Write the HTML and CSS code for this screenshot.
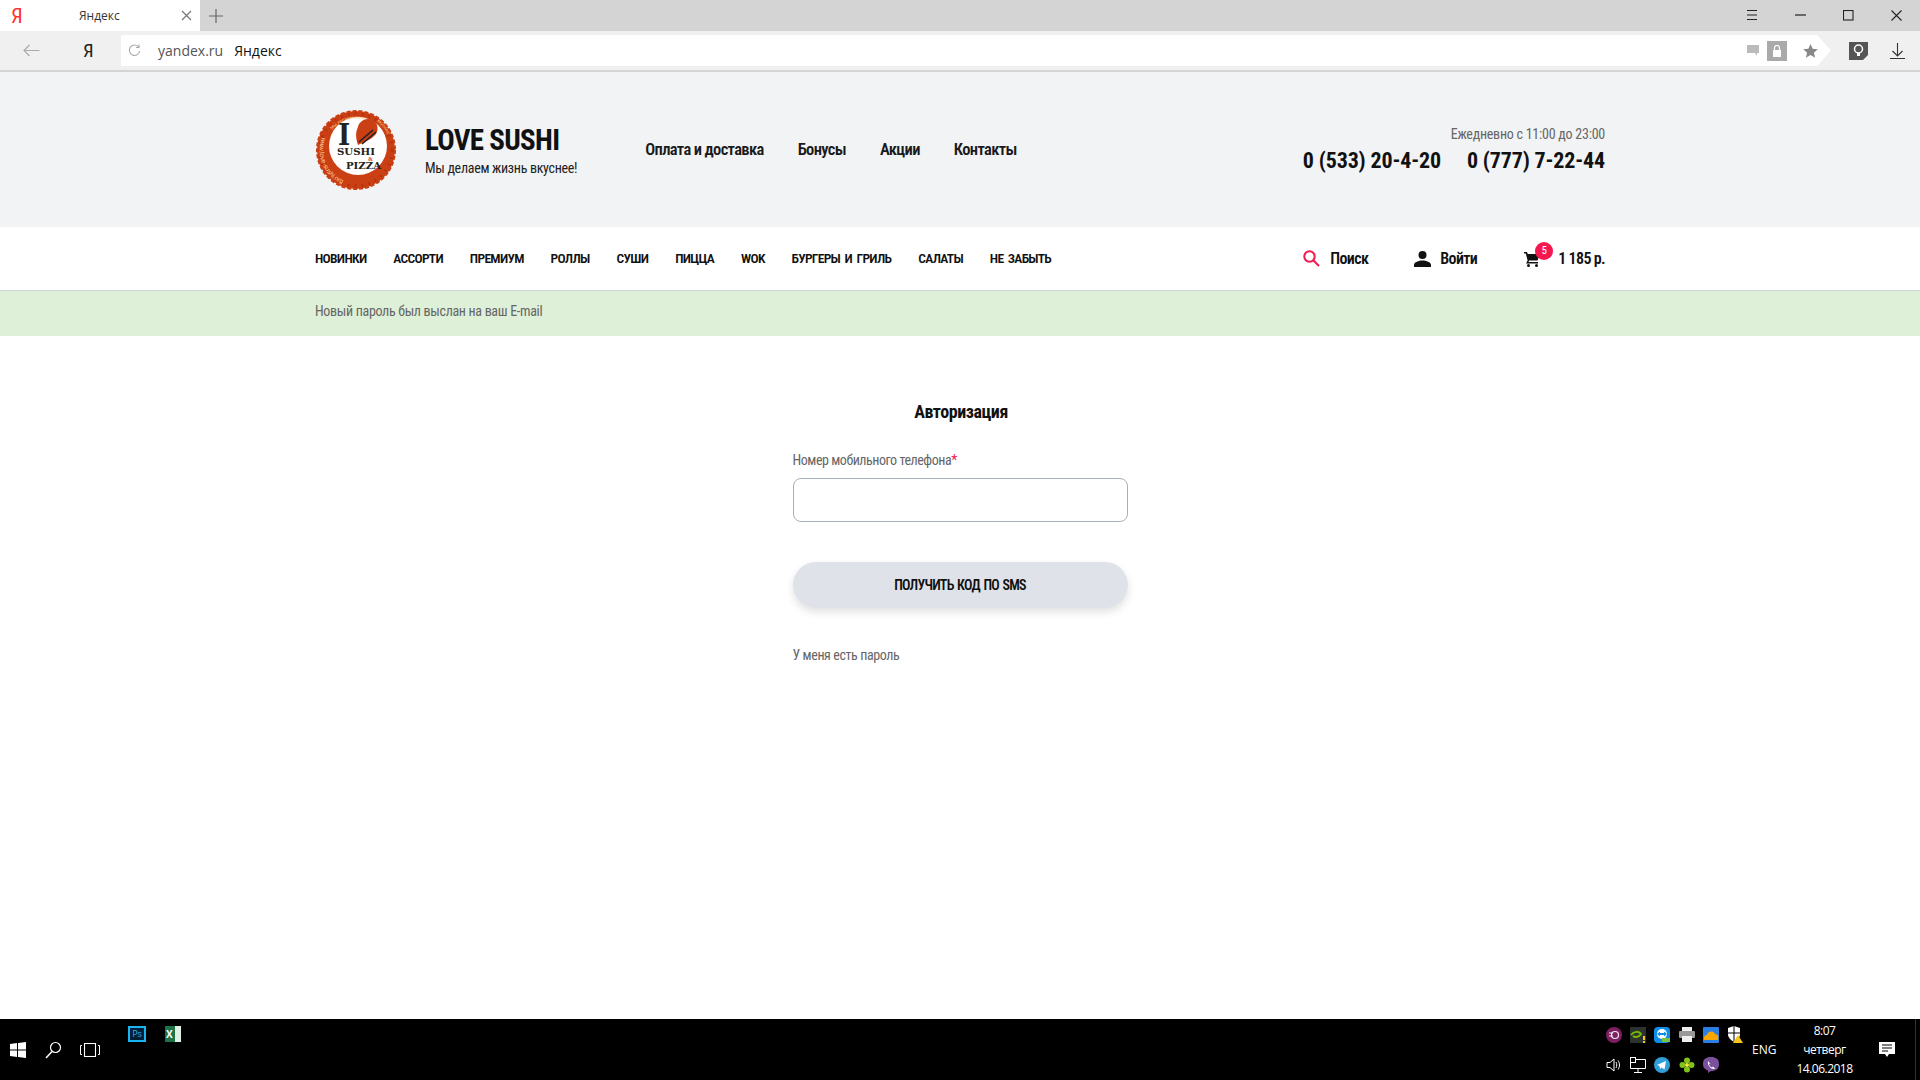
FILE: index.html
```html
<!DOCTYPE html>
<html lang="ru">
<head>
    <meta charset="UTF-8">
    <title>Яндекс</title>
    <link rel="stylesheet" href="styles.css">
</head>
<body>
    <!-- Browser chrome -->
    <div class="tabstrip">
        <div class="tab">
            <span class="tab-logo">Я</span>
            <span class="tab-title">Яндекс</span>
            <svg class="tab-close" width="11" height="11" viewBox="0 0 11 11"><path d="M1 1l9 9M10 1l-9 9" stroke="#777" stroke-width="1.2"/></svg>
        </div>
        <svg class="tab-new" width="14" height="14" viewBox="0 0 14 14"><path d="M7 0v14M0 7h14" stroke="#666" stroke-width="1.2"/></svg>
        <div class="win-buttons">
            <svg width="12" height="10" viewBox="0 0 12 10"><path d="M1 .5h10M1 5h10M1 9.500h10" stroke="#222"/></svg>
            <svg width="11" height="10" viewBox="0 0 11 10"><path d="M0 5h11" stroke="#222" stroke-width="1.200"/></svg>
            <svg width="11" height="11" viewBox="0 0 11 11"><rect x=".5" y=".5" width="9.500" height="9.500" fill="none" stroke="#222" stroke-width="1.100"/></svg>
            <svg width="11" height="11" viewBox="0 0 11 11"><path d="M.5.5l10 10M10.500.5l-10 10" stroke="#222" stroke-width="1.100"/></svg>
        </div>
    </div>
    <div class="toolbar">
        <svg class="tb-back" width="17" height="13" viewBox="0 0 17 13"><path d="M16.500 6.500H1M6.500 1L1 6.500 6.500 12" fill="none" stroke="#aaa" stroke-width="1.100"/></svg>
        <span class="tb-ya">Я</span>
        <div class="omnibox">
            <svg class="reload" width="13" height="13" viewBox="0 0 13 13"><path d="M10.800 3.200A5.200 5.200 0 1 0 11.700 7M11 .5v3H8" fill="none" stroke="#aaa" stroke-width="1.100"/></svg>
            <span class="url">yandex.ru</span>
            <span class="page-name">Яндекс</span>
            <svg class="omni-chat" width="13" height="12" viewBox="0 0 13 12"><path d="M0 0h12v8h-2v3L8 8H0z" fill="#bbb"/></svg>
            <span class="omni-lock"><svg width="10" height="12" viewBox="0 0 10 12"><path d="M2.500 5V3a2.500 2.500 0 0 1 5 0v2" fill="none" stroke="#fff" stroke-width="1.200"/><rect x="1" y="5" width="8" height="7" fill="#fff"/></svg></span>
            <svg class="omni-star" width="15" height="14" viewBox="0 0 15 14"><path d="M7.500 0l2.100 4.800 5.200.5-3.900 3.400 1.200 5.100-4.600-2.700-4.600 2.700 1.200-5.100L.2 5.300l5.200-.5z" fill="#888"/></svg>
        </div>
        <svg class="tb-bulb" width="19" height="19" viewBox="0 0 19 19"><path d="M0 1h19v13l-5 5H0z" fill="#555"/><circle cx="9.500" cy="8" r="4" fill="none" stroke="#fff" stroke-width="1.500"/><path d="M8 12h3v3H8z" fill="#fff"/></svg>
        <svg class="tb-down" width="15" height="16" viewBox="0 0 15 16"><path d="M7.500 0v13M2.500 8l5 5 5-5M0 15.500h15" fill="none" stroke="#333" stroke-width="1.100"/></svg>
    </div>

    <!-- Site -->
    <header class="site-head">
        <div class="wrap head-row">
            <a class="brand">
                <svg class="logo" width="82" height="82" viewBox="0 0 82 82">
                    <defs><path id="ring-top" d="M11 31a32 32 0 0 1 58-5"/><path id="ring-right" d="M62 12a36 36 0 0 1 13 23"/><path id="ring-bottom" d="M7 28a36 36 0 0 0 52 44"/></defs>
                    <circle cx="41" cy="41" r="39" fill="#cb3f14" stroke="#cb3f14" stroke-width="2" stroke-dasharray="4 2"/>
                    <circle cx="41" cy="41" r="36" fill="none" stroke="#b8330f" stroke-width="3" stroke-dasharray="2 5"/>
                    <circle cx="43" cy="37" r="29" fill="#fff"/>
                    <text class="logo-ring" font-size="4.500"><textPath href="#ring-top" startOffset="12">Мы делаем жизнь</textPath></text>
                    <text class="logo-ring" font-size="4.500"><textPath href="#ring-right">вкуснее!</textPath></text>
                    <text class="logo-ring" font-size="6.500"><textPath href="#ring-bottom">www.love-sushi.org</textPath></text>
                    <text class="logo-i" x="23" y="36" font-size="29">I</text>
                    <path d="M43 18c1-6 9-10 14-7 6 3 7 9 4 14-4 5-11 8-18 11-2-6-3-12 0-18z" fill="#cb3f14"/>
                    <path d="M44 33l14-12M47 35l14-12" stroke="#222" stroke-width="1.500"/>
                    <text class="logo-sushi" x="22" y="46" font-size="9.500" textLength="38" lengthAdjust="spacingAndGlyphs">SUSHI</text>
                    <text class="logo-and" x="53" y="52" font-size="6">&amp;</text>
                    <text class="logo-sushi" x="31" y="60" font-size="9.500" textLength="35" lengthAdjust="spacingAndGlyphs">PIZZA</text>
                </svg>
                <div class="brand-text">
                    <div class="brand-name">LOVE SUSHI</div>
                    <div class="brand-slogan">Мы делаем жизнь вкуснее!</div>
                </div>
            </a>
            <nav class="top-menu">
                <a>Оплата и доставка</a>
                <a>Бонусы</a>
                <a>Акции</a>
                <a>Контакты</a>
            </nav>
            <div class="contacts">
                <div class="hours">Ежедневно с 11:00 до 23:00</div>
                <div class="phones">
                    <span>0 (533) 20-4-20</span>
                    <span>0 (777) 7-22-44</span>
                </div>
            </div>
        </div>
    </header>

    <div class="cat-bar">
        <div class="wrap cat-row">
            <nav class="cats">
                <a>НОВИНКИ</a>
                <a>АССОРТИ</a>
                <a>ПРЕМИУМ</a>
                <a>РОЛЛЫ</a>
                <a>СУШИ</a>
                <a>ПИЦЦА</a>
                <a>WOK</a>
                <a>БУРГЕРЫ И ГРИЛЬ</a>
                <a>САЛАТЫ</a>
                <a>НЕ ЗАБЫТЬ</a>
            </nav>
            <div class="actions">
                <a class="action action-search">
                    <svg width="17" height="17" viewBox="0 0 17 17"><circle cx="6.500" cy="6.500" r="5.200" fill="none" stroke="#f5184f" stroke-width="2"/><path d="M10.500 10.500l5.500 5.500" stroke="#f5184f" stroke-width="2"/></svg>
                    Поиск
                </a>
                <a class="action action-login">
                    <svg width="17" height="16" viewBox="0 0 17 16"><circle cx="8.500" cy="4" r="4" fill="#111"/><path d="M0 16v-2c0-3 5-4.500 8.500-4.500S17 11 17 14v2z" fill="#111"/></svg>
                    Войти
                </a>
                <a class="action action-cart">
                    <span class="cart-icon">
                        <svg width="16" height="16" viewBox="0 0 16 16"><path d="M0 1h3l.7 2H16l-2.500 6.500H5.200l-.8 1.500H14v1.500H2l1.600-3L1.800 2.500H0z" fill="#111"/><circle cx="4.500" cy="14.500" r="1.500" fill="#111"/><circle cx="12.500" cy="14.500" r="1.500" fill="#111"/></svg>
                        <span class="badge">5</span>
                    </span>
                    1 185 р.
                </a>
            </div>
        </div>
    </div>

    <div class="notice">
        <div class="wrap">Новый пароль был выслан на ваш E-mail</div>
    </div>

    <main class="content">
        <form class="auth">
            <h2>Авторизация</h2>
            <label>Номер мобильного телефона<i>*</i></label>
            <input type="text">
            <button type="button">ПОЛУЧИТЬ КОД ПО SMS</button>
            <a class="auth-link">У меня есть пароль</a>
        </form>
    </main>

    <!-- Windows taskbar -->
    <footer class="taskbar">
        <div class="task-left">
            <svg width="18" height="18" viewBox="0 0 18 18"><path d="M1 3l7-1v6.500H1zM9 1.900L17 1v7.500H9zM1 9.500h7V16l-7-1zM9 9.500h8V17l-8-1.100z" fill="#fff"/></svg>
            <svg width="17" height="18" viewBox="0 0 17 18"><circle cx="10.500" cy="6.500" r="5" fill="none" stroke="#fff" stroke-width="1.200"/><path d="M7 10.500L1 17" stroke="#fff" stroke-width="1.500"/></svg>
            <svg width="20" height="14" viewBox="0 0 20 14"><rect x="4.500" y=".5" width="11" height="13" fill="none" stroke="#fff" stroke-width="1.100"/><path d="M2 2.500H.5v9H2M18 2.500h1.500v9H18" fill="none" stroke="#fff"/></svg>
            <div class="pinned">
                <span class="ps">Ps</span>
                <span class="xl"><b>X</b></span>
            </div>
        </div>
        <div class="task-right">
            <div class="tray">
                <svg width="16" height="16" viewBox="0 0 16 16"><circle cx="8" cy="8" r="8" fill="#7e1f63"/><circle cx="9" cy="8" r="3.500" fill="none" stroke="#eee" stroke-width="1.200"/><path d="M3 6h4M3 9h4" stroke="#eee"/></svg>
                <svg width="16" height="16" viewBox="0 0 16 16"><rect width="16" height="16" fill="#2c332c"/><path d="M1 8c3-4 8-4 10-1-2 3-6 4-8 2" fill="none" stroke="#76b900" stroke-width="2"/><path d="M13 9h2v4h-2zM13 14h2v2h-2z" fill="#f5c518"/></svg>
                <svg width="16" height="16" viewBox="0 0 16 16"><rect width="16" height="16" rx="4" fill="#0e8ee9"/><circle cx="8" cy="7" r="5" fill="#fff"/><path d="M3 7l3-2.500v1.500h4V4.500L13 7l-3 2.500V8H6v1.500z" fill="#0e8ee9"/><rect x="8" y="11" width="8" height="4" fill="#7ac143"/></svg>
                <svg width="16" height="15" viewBox="0 0 16 15"><rect x="3" width="10" height="5" fill="#eee"/><rect y="4" width="16" height="7" rx="1" fill="#999"/><rect x="3" y="9" width="10" height="6" fill="#eee"/></svg>
                <svg width="16" height="16" viewBox="0 0 16 16"><rect width="16" height="16" rx="1" fill="#2a7fe0"/><path d="M1 13c-1-3 1-5 3-5 0-4 7-5 8-1 3 0 4 3 3 6z" fill="#f7a600"/></svg>
                <svg width="16" height="17" viewBox="0 0 16 17"><path d="M1 2l6-2 6 2v6c0 4-3 6-6 8-3-2-6-4-6-8z" fill="#fff"/><path d="M7 0v16M1 7h12" stroke="#000"/><path d="M11 9l5 8H6z" fill="#f5c518"/></svg>
                <svg width="16" height="16" viewBox="0 0 16 16"><path d="M1 5.500h3L8 2v12l-4-3.500H1z" fill="none" stroke="#fff"/><path d="M10 5c1 2 1 4 0 6M12 3.500c2 3 2 6 0 9" fill="none" stroke="#fff"/></svg>
                <svg width="16" height="16" viewBox="0 0 16 16"><path d="M.5 2.500h15v9H.5zM8 11.500V15M4 15.500h8" fill="none" stroke="#fff"/><rect x=".5" y=".5" width="5" height="5" fill="#000" stroke="#fff"/></svg>
                <svg width="16" height="16" viewBox="0 0 16 16"><circle cx="8" cy="8" r="8" fill="#2f9fd8"/><path d="M3 8l9-4-1.500 8.500-3-2-1.500 1.500-.5-3z" fill="#fff"/></svg>
                <svg width="16" height="16" viewBox="0 0 16 16"><circle cx="8" cy="3.500" r="3" fill="#7fc31c"/><circle cx="8" cy="12.500" r="3" fill="#7fc31c"/><circle cx="3.500" cy="8" r="3" fill="#7fc31c"/><circle cx="12.500" cy="8" r="3" fill="#7fc31c"/><circle cx="8" cy="8" r="2" fill="#f5e23c"/></svg>
                <svg width="16" height="16" viewBox="0 0 16 16"><path d="M8 0c5 0 8 2 8 7s-3 7-8 7l-3 2v-2.500C1 12 0 10 0 7c0-5 3-7 8-7z" fill="#7b519d"/><path d="M5 4l2 2.500-1 1c.5 1.500 1.500 2.500 3 3l1-1 2 2c-2 2-8-2-7-7.500z" fill="#fff"/></svg>
            </div>
            <span class="lang">ENG</span>
            <div class="clock">
                <span>8:07</span>
                <span>четверг</span>
                <span>14.06.2018</span>
            </div>
            <svg class="notif" width="16" height="16" viewBox="0 0 16 16"><path d="M0 0h16v12h-6l-2 3-2-3H0z" fill="#fff"/><path d="M3 3h10M3 6h10M3 9h6" stroke="#000"/></svg>
            <span class="peek"></span>
        </div>
    </footer>
</body>
</html>
```

FILE: styles.css
```css
* {
    box-sizing: border-box;
}
html, body {
    height: 100%;
}
body {
    margin: 0;
    display: flex;
    flex-direction: column;
    font-family: "Roboto", "Liberation Sans", sans-serif;
    font-stretch: 75%;
    color: #111;
    background: #fff;
    overflow: hidden;
}
a {
    color: inherit;
    text-decoration: none;
}

/* browser */
.tabstrip {
    height: 31px;
    background: #d4d4d4;
    display: flex;
    align-items: center;
    font-family: "Open Sans", sans-serif;
    font-stretch: 100%;
}
.tab {
    width: 200px;
    height: 100%;
    background: #fff;
    display: flex;
    align-items: center;
    padding: 0 8px 0 11px;
}
.tab-logo {
    color: #f33;
    font-family: "Roboto", sans-serif;
    font-stretch: 75%;
    font-size: 21px;
    width: 68px;
}
.tab-title {
    font-size: 12px;
    color: #333;
    flex: 1;
}
.tab-new {
    margin-left: 9px;
}
.win-buttons {
    margin-left: auto;
    display: flex;
    align-items: center;
    gap: 37px;
    padding-right: 18px;
    margin-top: -1px;
}
.toolbar {
    height: 41px;
    background: #f0f0f0;
    border-bottom: 2px solid #d4d4d4;
    display: flex;
    align-items: center;
}
.tb-back {
    margin-left: 23px;
}
.tb-ya {
    font-size: 19px;
    margin-left: 43px;
    width: 38px;
    color: #222;
}
.omnibox {
    width: 1710px;
    height: 31px;
    background: #fff;
    display: flex;
    align-items: center;
    padding-left: 7px;
    font-family: "Open Sans", sans-serif;
    font-stretch: 100%;
    font-size: 14px;
    margin-right: 16px;
    clip-path: polygon(0 0, 1696px 0, 100% 50%, 1696px 100%, 0 100%);
}
.url {
    margin-left: 17px;
    color: #555;
}
.page-name {
    margin-left: 11px;
    color: #111;
}
.omni-chat {
    margin-left: auto;
}
.omni-lock {
    width: 20px;
    height: 20px;
    background: #aaa;
    display: flex;
    align-items: center;
    justify-content: center;
    margin-left: 7px;
}
.omni-star {
    margin: 0 13px 0 16px;
}
.tb-bulb {
    margin-left: 2px;
}
.tb-down {
    margin-left: 22px;
}

/* site */
.wrap {
    width: 1290px;
    margin: 0 auto;
}
.site-head {
    height: 155px;
    background: #f2f3f5;
}
.head-row {
    height: 100%;
    display: flex;
    align-items: center;
}
.brand {
    display: flex;
    align-items: center;
    gap: 28px;
}
.logo-ring {
    fill: #ffd090;
    font-family: "Liberation Sans", sans-serif;
}
.logo-i {
    font-family: "DejaVu Serif", serif;
    font-weight: 700;
    fill: #222;
}
.logo-sushi {
    font-family: "DejaVu Serif", serif;
    font-weight: 700;
    fill: #222;
}
.logo-and {
    font-family: "Liberation Serif", serif;
    font-weight: 700;
    fill: #cb3f14;
}
.brand-name {
    font-size: 29px;
    font-weight: 700;
    letter-spacing: -0.700px;
    line-height: 36px;
}
.brand-slogan {
    font-size: 14px;
    letter-spacing: -0.300px;
    line-height: 18px;
    margin-top: 1px;
    color: #222;
}
.top-menu {
    display: flex;
    gap: 34px;
    margin-left: 68px;
    font-size: 16.500px;
    letter-spacing: -0.650px;
    font-weight: 600;
    color: #1a1a1a;
}
.contacts {
    margin-left: auto;
    text-align: right;
    padding-top: 1px;
}
.hours {
    font-size: 14px;
    letter-spacing: -0.250px;
    color: #666;
    line-height: 18px;
}
.phones {
    display: flex;
    gap: 26px;
    margin-top: 3px;
    font-size: 22px;
    font-weight: 700;
    letter-spacing: -0.150px;
    line-height: 30px;
}
.cat-bar {
    height: 64px;
    border-bottom: 1px solid #ced3db;
}
.cat-row {
    height: 100%;
    display: flex;
    align-items: center;
    justify-content: space-between;
}
.cats {
    display: flex;
    gap: 26.900px;
    margin-top: -1px;
    font-size: 13.500px;
    letter-spacing: -0.700px;
    word-spacing: 2px;
    font-weight: 600;
}
.actions {
    display: flex;
    align-items: center;
    font-size: 16px;
    letter-spacing: -0.650px;
    font-weight: 600;
}
.action {
    display: flex;
    align-items: center;
}
.action-search {
    gap: 10px;
}
.action-login {
    gap: 9px;
    margin-left: 46px;
}
.action-cart {
    gap: 18px;
    margin-left: 47px;
}
.cart-icon {
    position: relative;
    display: flex;
}
.badge {
    position: absolute;
    left: 11px;
    top: -9px;
    width: 18px;
    height: 18px;
    border-radius: 50%;
    background: #f5184f;
    color: #fff;
    font-size: 11px;
    letter-spacing: 0;
    font-weight: 400;
    text-align: center;
    line-height: 18px;
}
.notice {
    height: 45px;
    background: #dff0d8;
    color: #666;
    font-size: 14px;
    letter-spacing: -0.320px;
    line-height: 40px;
}
.content {
    flex: 1;
}
.auth {
    width: 335px;
    margin: 0 auto;
    padding-top: 64px;
    display: flex;
    flex-direction: column;
}
.auth h2 {
    margin: 0;
    padding-left: 2px;
    font-size: 18px;
    letter-spacing: -0.450px;
    line-height: 24px;
    text-align: center;
}
.auth label {
    margin-top: 27px;
    font-size: 14px;
    letter-spacing: -0.450px;
    line-height: 18px;
    color: #666;
}
.auth label i {
    color: #f5184f;
    font-style: normal;
}
.auth input {
    margin-top: 9px;
    height: 44px;
    border: 1px solid #a3afc0;
    border-radius: 8px;
    background: #fff;
}
.auth button {
    margin-top: 40px;
    height: 46px;
    border: 0;
    border-radius: 23px;
    background: #dfe3e9;
    box-shadow: 0 4px 8px rgba(0, 0, 0, 0.12);
    font-family: inherit;
    font-stretch: inherit;
    font-size: 14px;
    letter-spacing: -0.750px;
    word-spacing: 1px;
    font-weight: 600;
    color: #111;
}
.auth-link {
    margin-top: 38px;
    font-size: 14px;
    letter-spacing: -0.400px;
    line-height: 18px;
    color: #666;
}

/* taskbar */
.taskbar {
    height: 61px;
    background: #000;
    color: #fff;
    display: flex;
    align-items: center;
    justify-content: space-between;
    font-family: "Open Sans", sans-serif;
    font-stretch: 100%;
    font-size: 12px;
}
.task-left {
    display: flex;
    align-items: center;
    align-self: stretch;
    gap: 18px;
    padding-left: 9px;
}
.pinned {
    display: flex;
    gap: 19px;
    align-self: flex-start;
    padding-top: 7px;
    margin-left: 10px;
}
.ps {
    width: 18px;
    height: 16px;
    border: 2px solid #19b5f1;
    background: #001e36;
    color: #2fb6ee;
    font-size: 9px;
    line-height: 12px;
    text-align: center;
}
.xl {
    width: 16px;
    height: 16px;
    background: linear-gradient(90deg, #1f7246 62%, #dff0e4 62%);
    display: block;
    font-size: 10px;
    line-height: 16px;
    padding-left: 1px;
}
.task-right {
    display: flex;
    align-items: center;
    align-self: stretch;
}
.tray {
    display: grid;
    grid-template-columns: repeat(6, 16px);
    gap: 14px 8.200px;
    align-items: center;
    align-self: center;
}
.lang {
    margin-left: 9px;
    width: 35px;
    font-size: 12px;
}
.clock {
    width: 75px;
    display: flex;
    flex-direction: column;
    gap: 1px;
    text-align: center;
    line-height: 18px;
    letter-spacing: -0.500px;
}
.notif {
    margin-left: 17px;
    margin-right: 20px;
}
.peek {
    width: 5px;
    align-self: stretch;
    border-left: 1px solid #333;
}
```
